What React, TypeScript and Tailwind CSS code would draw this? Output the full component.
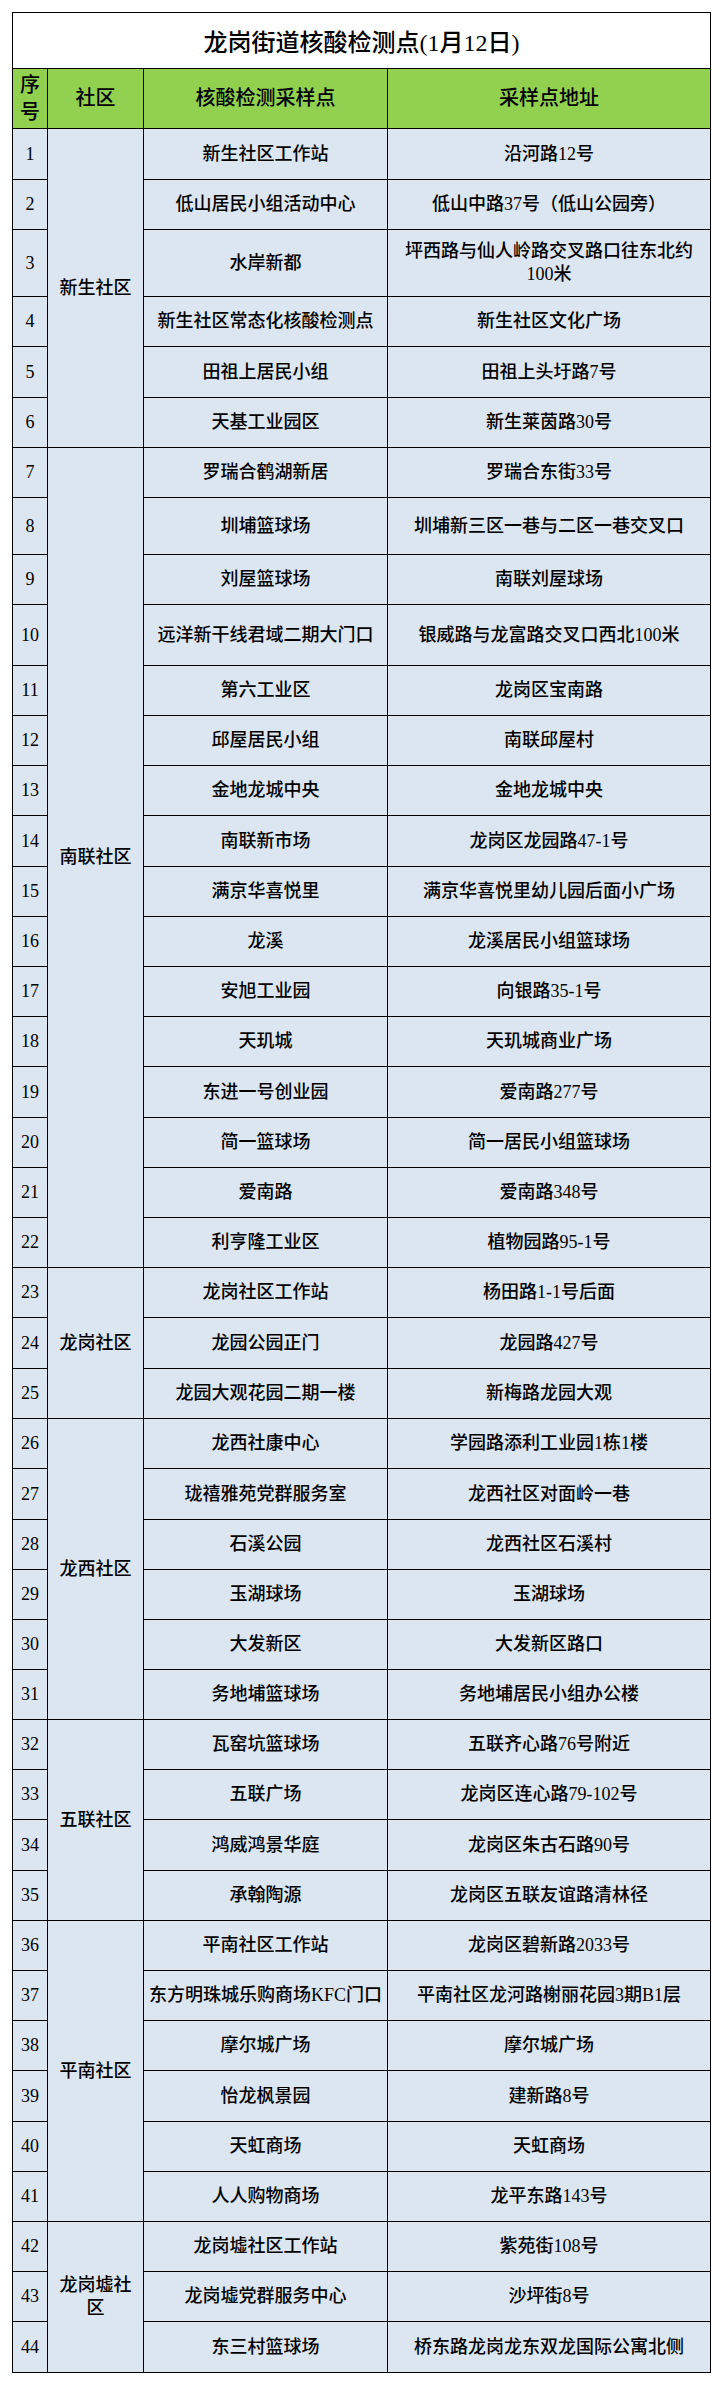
const H = "h-[49px]";
const T = "h-[50px]";

type Row = { no: number; site: string; addr: string; h: string };
type Group = { name: string; span: string; rows: Row[] };

const groups: Group[] = [
  {
    name: "新生社区",
    span: "row-span-6",
    rows: [
      { no: 1, site: "新生社区工作站", addr: "沿河路12号", h: T },
      { no: 2, site: "低山居民小组活动中心", addr: "低山中路37号（低山公园旁）", h: H },
      { no: 3, site: "水岸新都", addr: "坪西路与仙人岭路交叉路口往东北约100米", h: "h-[66px]" },
      { no: 4, site: "新生社区常态化核酸检测点", addr: "新生社区文化广场", h: H },
      { no: 5, site: "田祖上居民小组", addr: "田祖上头圩路7号", h: T },
      { no: 6, site: "天基工业园区", addr: "新生莱茵路30号", h: H },
    ],
  },
  {
    name: "南联社区",
    span: "row-span-16",
    rows: [
      { no: 7, site: "罗瑞合鹤湖新居", addr: "罗瑞合东街33号", h: H },
      { no: 8, site: "圳埔篮球场", addr: "圳埔新三区一巷与二区一巷交叉口", h: "h-[56px]" },
      { no: 9, site: "刘屋篮球场", addr: "南联刘屋球场", h: H },
      { no: 10, site: "远洋新干线君域二期大门口", addr: "银威路与龙富路交叉口西北100米", h: "h-[60px]" },
      { no: 11, site: "第六工业区", addr: "龙岗区宝南路", h: H },
      { no: 12, site: "邱屋居民小组", addr: "南联邱屋村", h: H },
      { no: 13, site: "金地龙城中央", addr: "金地龙城中央", h: H },
      { no: 14, site: "南联新市场", addr: "龙岗区龙园路47-1号", h: T },
      { no: 15, site: "满京华喜悦里", addr: "满京华喜悦里幼儿园后面小广场", h: H },
      { no: 16, site: "龙溪", addr: "龙溪居民小组篮球场", h: H },
      { no: 17, site: "安旭工业园", addr: "向银路35-1号", h: H },
      { no: 18, site: "天玑城", addr: "天玑城商业广场", h: H },
      { no: 19, site: "东进一号创业园", addr: "爱南路277号", h: T },
      { no: 20, site: "简一篮球场", addr: "简一居民小组篮球场", h: H },
      { no: 21, site: "爱南路", addr: "爱南路348号", h: H },
      { no: 22, site: "利亨隆工业区", addr: "植物园路95-1号", h: H },
    ],
  },
  {
    name: "龙岗社区",
    span: "row-span-3",
    rows: [
      { no: 23, site: "龙岗社区工作站", addr: "杨田路1-1号后面", h: H },
      { no: 24, site: "龙园公园正门", addr: "龙园路427号", h: T },
      { no: 25, site: "龙园大观花园二期一楼", addr: "新梅路龙园大观", h: H },
    ],
  },
  {
    name: "龙西社区",
    span: "row-span-6",
    rows: [
      { no: 26, site: "龙西社康中心", addr: "学园路添利工业园1栋1楼", h: H },
      { no: 27, site: "珑禧雅苑党群服务室", addr: "龙西社区对面岭一巷", h: T },
      { no: 28, site: "石溪公园", addr: "龙西社区石溪村", h: H },
      { no: 29, site: "玉湖球场", addr: "玉湖球场", h: H },
      { no: 30, site: "大发新区", addr: "大发新区路口", h: H },
      { no: 31, site: "务地埔篮球场", addr: "务地埔居民小组办公楼", h: H },
    ],
  },
  {
    name: "五联社区",
    span: "row-span-4",
    rows: [
      { no: 32, site: "瓦窑坑篮球场", addr: "五联齐心路76号附近", h: H },
      { no: 33, site: "五联广场", addr: "龙岗区连心路79-102号", h: H },
      { no: 34, site: "鸿威鸿景华庭", addr: "龙岗区朱古石路90号", h: T },
      { no: 35, site: "承翰陶源", addr: "龙岗区五联友谊路清林径", h: H },
    ],
  },
  {
    name: "平南社区",
    span: "row-span-6",
    rows: [
      { no: 36, site: "平南社区工作站", addr: "龙岗区碧新路2033号", h: H },
      { no: 37, site: "东方明珠城乐购商场KFC门口", addr: "平南社区龙河路榭丽花园3期B1层", h: H },
      { no: 38, site: "摩尔城广场", addr: "摩尔城广场", h: H },
      { no: 39, site: "怡龙枫景园", addr: "建新路8号", h: T },
      { no: 40, site: "天虹商场", addr: "天虹商场", h: H },
      { no: 41, site: "人人购物商场", addr: "龙平东路143号", h: H },
    ],
  },
  {
    name: "龙岗墟社区",
    span: "row-span-3",
    rows: [
      { no: 42, site: "龙岗墟社区工作站", addr: "紫苑街108号", h: H },
      { no: 43, site: "龙岗墟党群服务中心", addr: "沙坪街8号", h: H },
      { no: 44, site: "东三村篮球场", addr: "桥东路龙岗龙东双龙国际公寓北侧", h: T },
    ],
  },
];

const cell = "flex items-center justify-center text-center bg-[#dce6f1] text-[18px] leading-[23px]";
const head = "flex items-center justify-center text-center bg-[#92d050] text-[20px] leading-[27px]";

export default function App() {
  return (
    <div className="min-h-[2395px] bg-white p-3 font-medium text-black font-['Liberation_Serif','Noto_Sans_CJK_SC',serif]">
      <div className="grid w-fit grid-cols-[34px_95px_243px_322px] gap-px bg-black p-px">
        <div className="col-span-4 flex h-[55px] items-center justify-center bg-white pt-1 text-[24px]">
          龙岗街道核酸检测点(1月12日)
        </div>

        <div className={`${head} h-[59px]`}>序号</div>
        <div className={head}>社区</div>
        <div className={head}>核酸检测采样点</div>
        <div className={head}>采样点地址</div>

        {groups.map((g) =>
          g.rows.map((r, i) => (
            <div key={r.no} className="contents">
              <div className={`${cell} col-start-1 ${r.h}`}>{r.no}</div>
              {i === 0 && <div className={`${cell} col-start-2 px-1 ${g.span}`}>{g.name}</div>}
              <div className={`${cell} col-start-3 px-1`}>{r.site}</div>
              <div className={`${cell} col-start-4 px-1`}>{r.addr}</div>
            </div>
          ))
        )}
      </div>
    </div>
  );
}
